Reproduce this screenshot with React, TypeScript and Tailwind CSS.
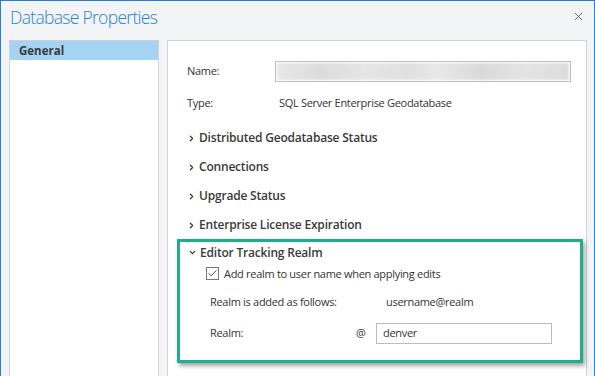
import { X, ChevronRight, ChevronDown, Check } from "lucide-react"

const sections = [
  "Distributed Geodatabase Status",
  "Connections",
  "Upgrade Status",
  "Enterprise License Expiration",
]

export default function App() {
  return (
    <div className="flex h-[376px] w-[595px] flex-col overflow-hidden border border-b-0 border-[#2a7dd1] bg-[#f3f4f5] font-['Open_Sans',sans-serif] text-[#333]">
      <div className="flex h-[39px] shrink-0 items-start justify-between pl-[9px] pr-[9px]">
        <h1 className="pt-[3px] text-[17.5px] font-light leading-[26px] tracking-[-0.7px] text-[#2184d6]">
          Database Properties
        </h1>
        <X size={13} strokeWidth={1.6} className="mt-[9px] text-[#555]" />
      </div>

      <div className="flex flex-1 gap-[8px] pl-[8px] pr-[7px]">
        <div className="w-[150px] border border-b-0 border-[#d2d2d2] bg-white">
          <div className="h-[19px] bg-[#a5d3f3] pl-[9px] text-[11.5px] font-bold leading-[19px] text-[#3a3a3a]">
            General
          </div>
        </div>

        <div className="flex flex-1 flex-col border border-b-0 border-[#d2d2d2] bg-white pl-[19px] pr-[15px] pt-[20px] text-[11px] tracking-[-0.3px]">
          <div className="flex items-center">
            <span className="w-[88px]">Name:</span>
            <div className="h-[21px] flex-1 border border-[#bcbcbc] p-[1px]">
              <div className="h-full w-full bg-[linear-gradient(90deg,#e8e8e8,#dcdcdc_15%,#e6e6e6_30%,#e0e0e0_45%,#e9e9e9_55%,#dadada_70%,#e4e4e4_85%,#dcdcdc)] blur-[1px]" />
            </div>
          </div>

          <div className="mt-[13px] flex items-center">
            <span className="w-[92px]">Type:</span>
            <span>SQL Server Enterprise Geodatabase</span>
          </div>

          <div className="mt-[12px] flex flex-col">
            {sections.map((s) => (
              <div key={s} className="flex h-[29px] items-center gap-[3px]">
                <ChevronRight size={9} strokeWidth={3.2} className="text-[#333]" />
                <span className="text-[12px] font-semibold tracking-[-0.2px] text-[#3a3a3a]">{s}</span>
              </div>
            ))}
          </div>

          <div className="-ml-[10px] -mr-[12px] -mt-[1px] h-[124px] border-[3px] border-[#1fae89] pl-[8px] shadow-[2px_3px_4px_rgba(0,0,0,0.35)]">
            <div className="flex h-[22px] items-center gap-[3px]">
              <ChevronDown size={9} strokeWidth={3.2} className="text-[#333]" />
              <span className="text-[12px] font-semibold tracking-[-0.2px] text-[#3a3a3a]">Editor Tracking Realm</span>
            </div>
            <div className="ml-[18px] mt-[2px] flex items-center gap-[5px]">
              <div className="flex h-[13px] w-[13px] items-center justify-center border border-[#777] bg-white">
                <Check size={11} strokeWidth={2} className="text-[#333]" />
              </div>
              <span>Add realm to user name when applying edits</span>
            </div>
            <div className="ml-[22px] mt-[12px] flex items-center">
              <span className="w-[176px]">Realm is added as follows:</span>
              <span>username@realm</span>
            </div>
            <div className="ml-[22px] mt-[12px] flex items-center">
              <span className="w-[146px]">Realm:</span>
              <span className="w-[20px]">@</span>
              <div className="flex h-[21px] w-[176px] items-center border border-[#bcbcbc] pl-[6px]">
                denver
              </div>
            </div>
          </div>
        </div>
      </div>
    </div>
  )
}
